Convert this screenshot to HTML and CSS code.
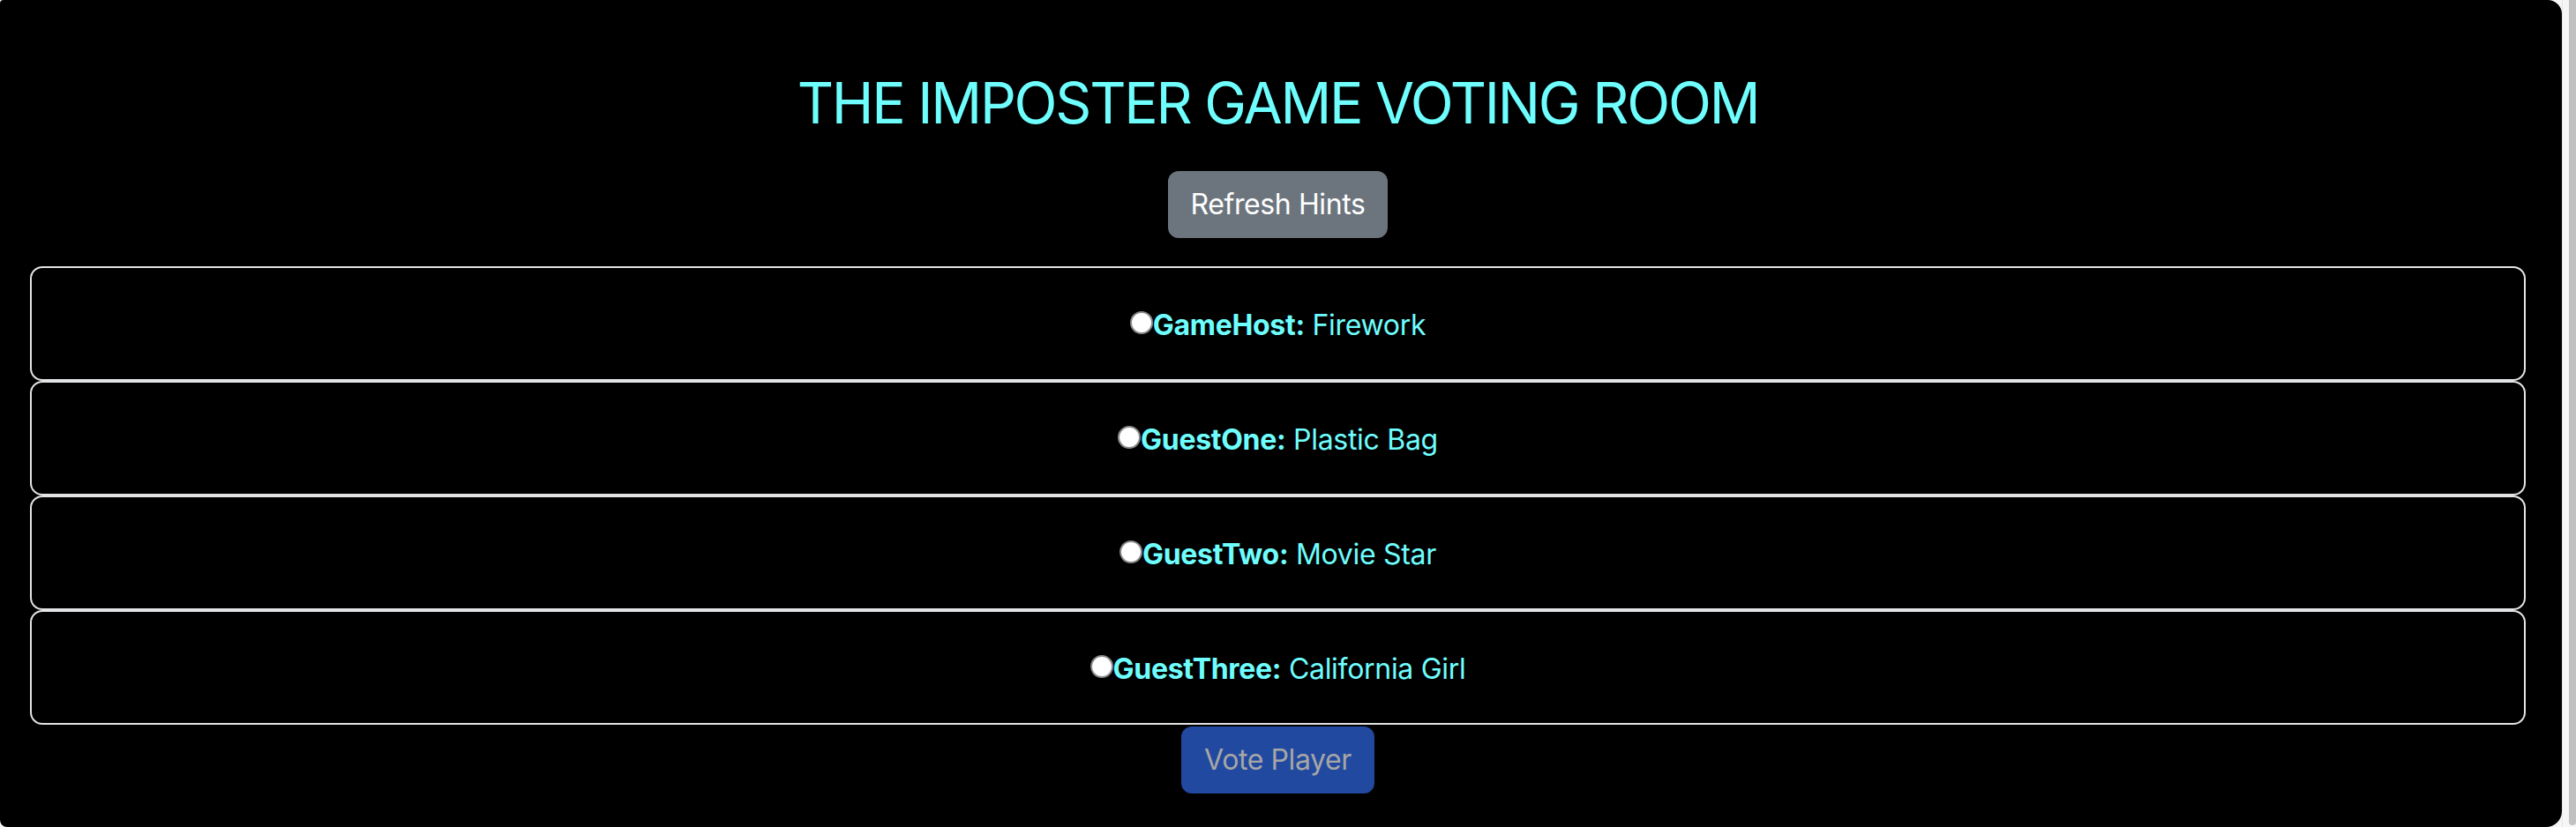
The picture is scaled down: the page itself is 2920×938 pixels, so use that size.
FILE: index.html
```html
<!DOCTYPE html>
<html lang="en">
<head>
<meta charset="utf-8">
<title>The Imposter Game Voting Room</title>
<link rel="stylesheet" href="styles.css">
</head>
<body>
<div class="page">
  <main class="panel">
    <h1 class="title">THE IMPOSTER GAME VOTING ROOM</h1>
    <div class="actions">
      <button class="btn btn-secondary" type="button">Refresh Hints</button>
    </div>
    <form class="vote-form">
      <div class="hint-list">
        <label class="hint-card">
          <input class="radio" type="radio" name="vote" value="GameHost">
          <span class="hint-text"><strong>GameHost:</strong> Firework</span>
        </label>
        <label class="hint-card">
          <input class="radio" type="radio" name="vote" value="GuestOne">
          <span class="hint-text"><strong>GuestOne:</strong> Plastic Bag</span>
        </label>
        <label class="hint-card">
          <input class="radio" type="radio" name="vote" value="GuestTwo">
          <span class="hint-text"><strong>GuestTwo:</strong> Movie Star</span>
        </label>
        <label class="hint-card">
          <input class="radio" type="radio" name="vote" value="GuestThree">
          <span class="hint-text"><strong>GuestThree:</strong> California Girl</span>
        </label>
      </div>
      <div class="actions actions-vote">
        <button class="btn btn-primary" type="submit" disabled>Vote Player</button>
      </div>
    </form>
  </main>
  <div class="scrollbar"><div class="thumb"></div></div>
</div>
</body>
</html>
```

FILE: styles.css
```css
* {
  box-sizing: border-box;
}

html, body {
  margin: 0;
  padding: 0;
  background: #f6f6f6;
}

body {
  font-family: "Inter", "Liberation Sans", sans-serif;
  overflow: hidden;
}

.page {
  display: flex;
  height: 938px;
}

.panel {
  flex: 1;
  background: #000;
  border-radius: 4px 16px 18px 8px;
  padding: 0 41px 0 34px;
  display: flex;
  flex-direction: column;
  align-items: stretch;
}

.title {
  margin: 78px 0 0 0;
  font-size: 64px;
  line-height: 77px;
  font-weight: 400;
  color: #6ffefe;
  text-align: center;
  letter-spacing: -2.2px;
}

.actions {
  display: flex;
  justify-content: center;
  margin-top: 39px;
}

.actions-vote {
  margin-top: 2px;
}

.btn {
  font-family: inherit;
  font-size: 32px;
  line-height: 48px;
  padding: 12px 24px;
  border: 2px solid transparent;
  border-radius: 12px;
  letter-spacing: -0.4px;
}

.btn-secondary {
  background: #6c757d;
  border-color: #6c757d;
  color: #fff;
}

.btn-primary {
  background: #2249a0;
  border-color: #2249a0;
  color: #a6a6a6;
}

.vote-form {
  margin-top: 32px;
  display: flex;
  flex-direction: column;
}

.hint-list {
  display: flex;
  flex-direction: column;
}

.hint-card {
  height: 130px;
  padding-top: 3px;
  border: 2px solid #e3e4e6;
  border-radius: 14px;
  display: flex;
  align-items: center;
  justify-content: center;
  color: #6ffefe;
  font-size: 32px;
  line-height: 40px;
}

.radio {
  appearance: none;
  -webkit-appearance: none;
  width: 26px;
  height: 26px;
  margin: 0 0 5px 0;
  border: 2px solid #8a8a8a;
  border-radius: 50%;
  background: #fff;
  flex: none;
}

.hint-text {
  letter-spacing: -0.3px;
}

.hint-text strong {
  font-weight: 700;
}

.scrollbar {
  width: 16px;
  flex: none;
  background: #f6f6f6;
  border-left: 1px solid #e6e6e6;
  display: flex;
  justify-content: flex-end;
}

.thumb {
  width: 8px;
  height: 936px;
  background: #c1c1c1;
  border-radius: 0 0 4px 4px;
}
```
